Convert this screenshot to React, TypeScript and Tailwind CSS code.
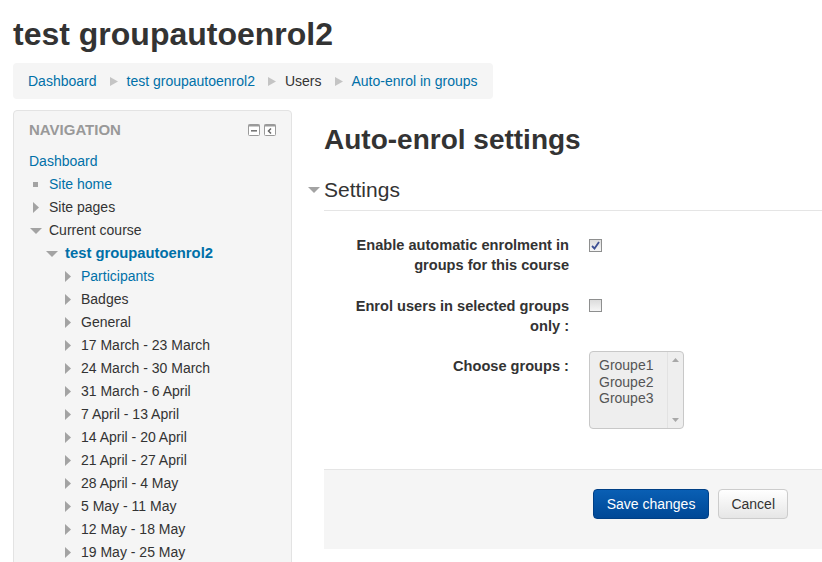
import React from "react";

const LINK = "#0070a8";

function RightTri() {
  return (
    <svg width="6" height="11" viewBox="0 0 6 11" className="block">
      <path d="M0 0 L6 5.5 L0 11 Z" fill="#a3a3a3" />
    </svg>
  );
}
function DownTri() {
  return (
    <svg width="12" height="6" viewBox="0 0 12 6" className="block">
      <path d="M0 0 L12 0 L6 6 Z" fill="#a3a3a3" />
    </svg>
  );
}
function Bullet() {
  return <div className="w-[5px] h-[5px] bg-[#a3a3a3]" />;
}
function Sep() {
  return (
    <svg width="8" height="9" viewBox="0 0 8 9" className="ml-[13px] mr-[9px] block">
      <path d="M0 0 L8 4.5 L0 9 Z" fill="#c4c4c4" />
    </svg>
  );
}

type Item = {
  text: string;
  level: number;
  icon: "none" | "right" | "down" | "bullet";
  link?: boolean;
  bold?: boolean;
};

const items: Item[] = [
  { text: "Dashboard", level: 0, icon: "none", link: true },
  { text: "Site home", level: 1, icon: "bullet", link: true },
  { text: "Site pages", level: 1, icon: "right" },
  { text: "Current course", level: 1, icon: "down" },
  { text: "test groupautoenrol2", level: 2, icon: "down", link: true, bold: true },
  { text: "Participants", level: 3, icon: "right", link: true },
  { text: "Badges", level: 3, icon: "right" },
  { text: "General", level: 3, icon: "right" },
  { text: "17 March - 23 March", level: 3, icon: "right" },
  { text: "24 March - 30 March", level: 3, icon: "right" },
  { text: "31 March - 6 April", level: 3, icon: "right" },
  { text: "7 April - 13 April", level: 3, icon: "right" },
  { text: "14 April - 20 April", level: 3, icon: "right" },
  { text: "21 April - 27 April", level: 3, icon: "right" },
  { text: "28 April - 4 May", level: 3, icon: "right" },
  { text: "5 May - 11 May", level: 3, icon: "right" },
  { text: "12 May - 18 May", level: 3, icon: "right" },
  { text: "19 May - 25 May", level: 3, icon: "right" },
];

const padFor: Record<number, string> = {
  0: "pl-0",
  1: "pl-[4px]",
  2: "pl-[20px]",
  3: "pl-[36px]",
};

function NavRow({ it }: { it: Item }) {
  return (
    <div className={`flex items-center h-[23px] ${padFor[it.level]}`}>
      {it.icon !== "none" && (
        <div className="w-[16px] h-[23px] flex items-center shrink-0">
          {it.icon === "right" && <RightTri />}
          {it.icon === "down" && (
            <div className="-ml-[3px]">
              <DownTri />
            </div>
          )}
          {it.icon === "bullet" && <Bullet />}
        </div>
      )}
      <span
        className={`whitespace-nowrap ${it.bold ? "font-bold text-[14.8px]" : "text-[14px]"}`}
        style={{ color: it.link ? LINK : "#333" }}
      >
        {it.text}
      </span>
    </div>
  );
}

function Checkbox({ checked }: { checked?: boolean }) {
  return (
    <div className="w-[13px] h-[13px] border border-[#8e8f8f] bg-gradient-to-b from-[#dcdcdc] to-[#f6f6f6] flex items-center justify-center">
      {checked && (
        <svg width="9" height="9" viewBox="0 0 9 9">
          <path d="M1 5 L3.5 7.5 L8 1" stroke="#3c4f93" strokeWidth="1.8" fill="none" />
        </svg>
      )}
    </div>
  );
}

export default function App() {
  return (
    <div
      className="h-[562px] w-[822px] overflow-hidden bg-white text-[#333]"
      style={{ fontFamily: '"Liberation Sans", Arial, sans-serif' }}
    >
      <div className="pl-[13px]">
        <h1 className="pt-[14px] h-[54px] text-[32px] leading-[40px] font-bold text-[#333] whitespace-nowrap">
          test groupautoenrol2
        </h1>
        <div className="mt-[9px] w-[480px] h-[36px] rounded-[4px] bg-[#f5f5f5] flex items-center pl-[15px] text-[14px]">
          <span style={{ color: LINK }}>Dashboard</span>
          <Sep />
          <span style={{ color: LINK }}>test groupautoenrol2</span>
          <Sep />
          <span className="text-[#333]">Users</span>
          <Sep />
          <span style={{ color: LINK }}>Auto-enrol in groups</span>
        </div>

        <div className="mt-[11px] flex gap-[32px]">
          {/* Navigation block */}
          <div className="w-[279px] shrink-0 h-[500px] bg-[#f5f5f5] border border-[#e3e3e3] rounded-[4px] pl-[15px] pr-[15px] pt-[9px]">
            <div className="flex items-center justify-between h-[20px]">
              <span className="text-[15px] font-bold text-[#999]">NAVIGATION</span>
              <div className="flex gap-[4px]">
                <svg width="12" height="12" viewBox="0 0 12 12">
                  <rect x="0.5" y="0.5" width="11" height="11" rx="1" fill="#fff" stroke="#9a9a9a" />
                  <rect x="0.5" y="0.5" width="11" height="2" fill="#9a9a9a" />
                  <rect x="3" y="6" width="6" height="1.6" fill="#777" />
                </svg>
                <svg width="12" height="12" viewBox="0 0 12 12">
                  <rect x="0.5" y="0.5" width="11" height="11" rx="1" fill="#fff" stroke="#9a9a9a" />
                  <rect x="0.5" y="0.5" width="11" height="2" fill="#9a9a9a" />
                  <path d="M7 4.5 L4.5 7 L7 9.5" stroke="#666" strokeWidth="1.5" fill="none" />
                </svg>
              </div>
            </div>
            <div className="mt-[10px]">
              {items.map((it, i) => (
                <NavRow key={i} it={it} />
              ))}
            </div>
          </div>

          {/* Main */}
          <div className="flex-1 pt-[12px]">
            <h2 className="text-[28px] leading-[36px] font-bold text-[#333] whitespace-nowrap">
              Auto-enrol settings
            </h2>
            <div className="mt-[18px] h-[35px] border-b border-[#e5e5e5] flex items-start">
              <div className="-ml-[16px] w-[16px] h-[28px] flex items-center">
                <DownTri />
              </div>
              <span className="text-[21px] leading-[28px] text-[#333]">Settings</span>
            </div>

            <div className="mt-[24px] flex">
              <div className="w-[245px] text-right text-[14.6px] leading-[20px] font-bold text-[#333]">
                Enable automatic enrolment in groups for this course
              </div>
              <div className="ml-[20px] mt-[4px]">
                <Checkbox checked />
              </div>
            </div>

            <div className="mt-[21px] flex">
              <div className="w-[245px] text-right text-[14.6px] leading-[20px] font-bold text-[#333]">
                Enrol users in selected groups only :
              </div>
              <div className="ml-[20px] mt-[3px]">
                <Checkbox />
              </div>
            </div>

            <div className="mt-[15px] flex">
              <div className="w-[245px] pt-[5px] text-right text-[14.6px] leading-[20px] font-bold text-[#333]">
                Choose groups :
              </div>
              <div className="ml-[20px] w-[95px] h-[78px] border border-[#c8c8c8] rounded-[4px] bg-[#eeeeee] flex overflow-hidden">
                <div className="flex-1 pl-[9px] pt-[5px] text-[14px] leading-[16.5px] text-[#555]">
                  <div>Groupe1</div>
                  <div>Groupe2</div>
                  <div>Groupe3</div>
                </div>
                <div className="w-[16px] border-l border-[#e2e2e2] flex flex-col items-center justify-between py-[6px]">
                  <svg width="7" height="4" viewBox="0 0 7 4">
                    <path d="M0 4 L3.5 0 L7 4 Z" fill="#a8a8a8" />
                  </svg>
                  <svg width="7" height="4" viewBox="0 0 7 4">
                    <path d="M0 0 L7 0 L3.5 4 Z" fill="#a8a8a8" />
                  </svg>
                </div>
              </div>
            </div>

            <div className="mt-[40px] h-[80px] bg-[#f5f5f5] border-t border-[#e5e5e5] flex justify-end items-start pt-[19px] pr-[34px] gap-[9px]">
              <button className="h-[30px] px-[13px] rounded-[4px] text-[14px] text-white bg-gradient-to-b from-[#0a5fb4] to-[#004896] border border-[#003f85]">
                Save changes
              </button>
              <button className="h-[30px] px-[12px] rounded-[4px] text-[14px] text-[#333] bg-gradient-to-b from-[#ffffff] to-[#e6e6e6] border border-[#cccccc]">
                Cancel
              </button>
            </div>
          </div>
        </div>
      </div>
    </div>
  );
}
